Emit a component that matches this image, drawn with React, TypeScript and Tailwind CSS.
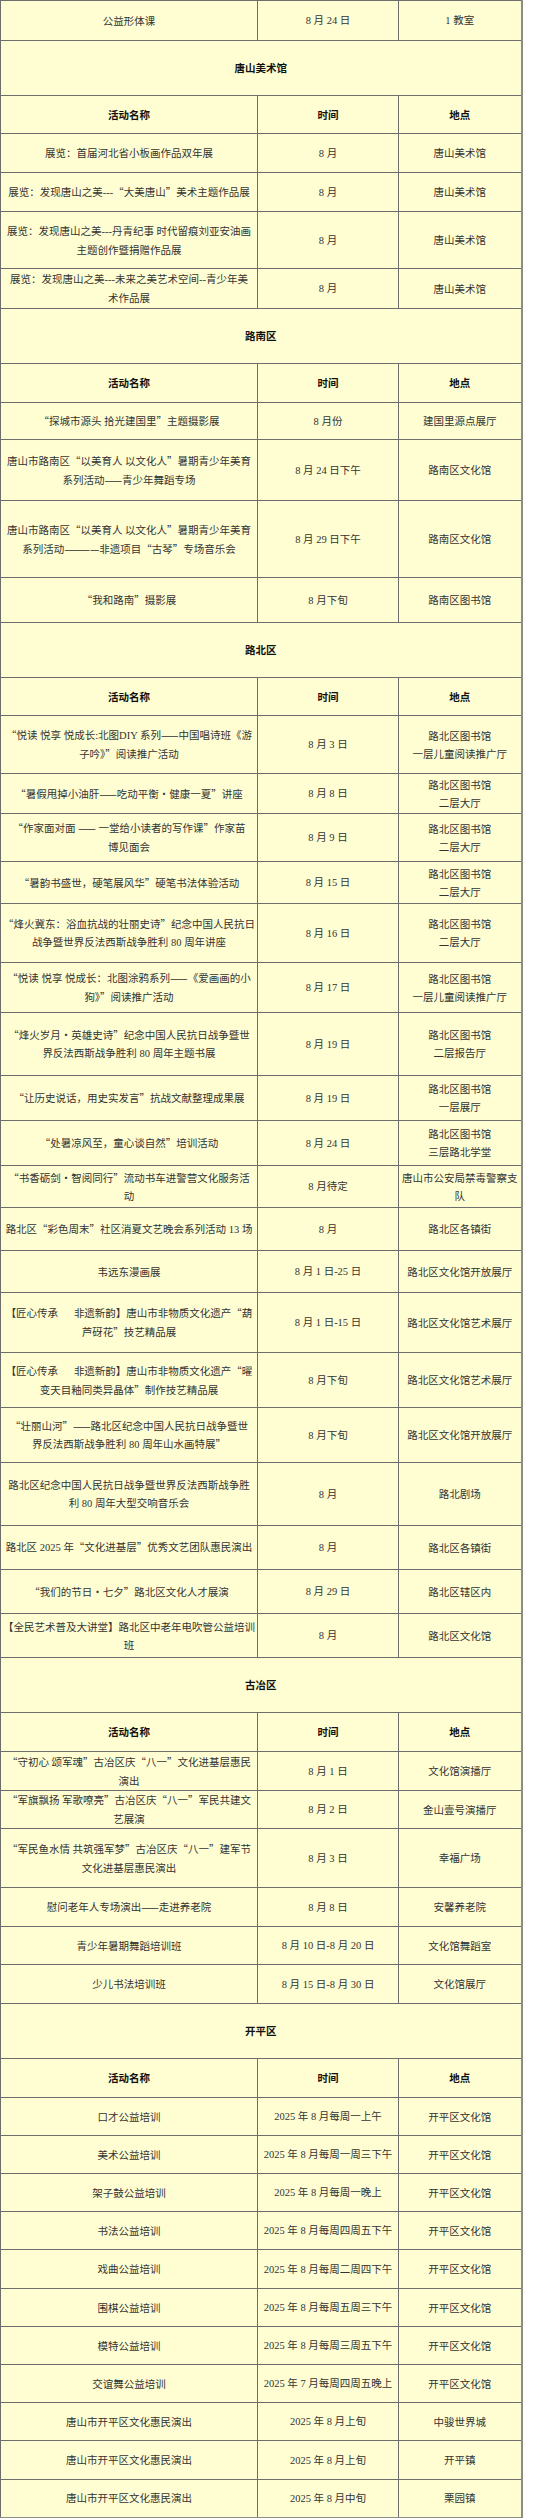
import React from 'react'

type Row =
  | { kind: 'section'; title: string; h: number }
  | { kind: 'head'; h: number }
  | { kind: 'item'; name: string; time: string; place: string; h: number }

const rows: Row[] = [
  { kind: 'item', name: '公益形体课', time: '8 月 24 日', place: '1 教室', h: 40 },

  { kind: 'section', title: '唐山美术馆', h: 55 },
  { kind: 'head', h: 38 },
  { kind: 'item', name: '展览：首届河北省小板画作品双年展', time: '8 月', place: '唐山美术馆', h: 39 },
  { kind: 'item', name: '展览：发现唐山之美---“大美唐山”美术主题作品展', time: '8 月', place: '唐山美术馆', h: 39 },
  { kind: 'item', name: '展览：发现唐山之美---丹青纪事 时代留痕刘亚安油画\n主题创作暨捐赠作品展', time: '8 月', place: '唐山美术馆', h: 57 },
  { kind: 'item', name: '展览：发现唐山之美---未来之美艺术空间--青少年美\n术作品展', time: '8 月', place: '唐山美术馆', h: 40 },

  { kind: 'section', title: '路南区', h: 55 },
  { kind: 'head', h: 39 },
  { kind: 'item', name: '“探城市源头 拾光建国里”主题摄影展', time: '8 月份', place: '建国里源点展厅', h: 37 },
  { kind: 'item', name: '唐山市路南区“以美育人 以文化人”暑期青少年美育\n系列活动——青少年舞蹈专场', time: '8 月 24 日下午', place: '路南区文化馆', h: 61 },
  { kind: 'item', name: '唐山市路南区“以美育人 以文化人”暑期青少年美育\n系列活动————非遗项目“古琴”专场音乐会', time: '8 月 29 日下午', place: '路南区文化馆', h: 77 },
  { kind: 'item', name: '“我和路南”摄影展', time: '8 月下旬', place: '路南区图书馆', h: 45 },

  { kind: 'section', title: '路北区', h: 55 },
  { kind: 'head', h: 38 },
  { kind: 'item', name: '“悦读 悦享 悦成长:北图DIY 系列——中国唱诗班《游\n子吟》”阅读推广活动', time: '8 月 3 日', place: '路北区图书馆\n一层儿童阅读推广厅', h: 58 },
  { kind: 'item', name: '“暑假甩掉小油肝——吃动平衡·健康一夏”讲座', time: '8 月 8 日', place: '路北区图书馆\n二层大厅', h: 40 },
  { kind: 'item', name: '“作家面对面 —— 一堂给小读者的写作课”作家苗\n博见面会', time: '8 月 9 日', place: '路北区图书馆\n二层大厅', h: 48 },
  { kind: 'item', name: '“暑韵书盛世，硬笔展风华”硬笔书法体验活动', time: '8 月 15 日', place: '路北区图书馆\n二层大厅', h: 42 },
  { kind: 'item', name: '“烽火冀东：浴血抗战的壮丽史诗”纪念中国人民抗日\n战争暨世界反法西斯战争胜利 80 周年讲座', time: '8 月 16 日', place: '路北区图书馆\n二层大厅', h: 59 },
  { kind: 'item', name: '“悦读 悦享 悦成长：北图涂鸦系列——《爱画画的小\n狗》”阅读推广活动', time: '8 月 17 日', place: '路北区图书馆\n一层儿童阅读推广厅', h: 50 },
  { kind: 'item', name: '“烽火岁月·英雄史诗”纪念中国人民抗日战争暨世\n界反法西斯战争胜利 80 周年主题书展', time: '8 月 19 日', place: '路北区图书馆\n二层报告厅', h: 63 },
  { kind: 'item', name: '“让历史说话，用史实发言”抗战文献整理成果展', time: '8 月 19 日', place: '路北区图书馆\n一层展厅', h: 45 },
  { kind: 'item', name: '“处暑凉风至，童心谈自然”培训活动', time: '8 月 24 日', place: '路北区图书馆\n三层路北学堂', h: 45 },
  { kind: 'item', name: '“书香砺剑·智阅同行”流动书车进警营文化服务活\n动', time: '8 月待定', place: '唐山市公安局禁毒警察支\n队', h: 42 },
  { kind: 'item', name: '路北区“彩色周末”社区消夏文艺晚会系列活动 13 场', time: '8 月', place: '路北区各镇街', h: 43 },
  { kind: 'item', name: '韦远东漫画展', time: '8 月 1 日-25 日', place: '路北区文化馆开放展厅', h: 42 },
  { kind: 'item', name: '【匠心传承      非遗新韵】唐山市非物质文化遗产“葫\n芦砑花”技艺精品展', time: '8 月 1 日-15 日', place: '路北区文化馆艺术展厅', h: 60 },
  { kind: 'item', name: '【匠心传承      非遗新韵】唐山市非物质文化遗产“曜\n变天目釉同类异晶体”制作技艺精品展', time: '8 月下旬', place: '路北区文化馆艺术展厅', h: 55 },
  { kind: 'item', name: '“壮丽山河”——路北区纪念中国人民抗日战争暨世\n界反法西斯战争胜利 80 周年山水画特展”', time: '8 月下旬', place: '路北区文化馆开放展厅', h: 55 },
  { kind: 'item', name: '路北区纪念中国人民抗日战争暨世界反法西斯战争胜\n利 80 周年大型交响音乐会', time: '8 月', place: '路北剧场', h: 63 },
  { kind: 'item', name: '路北区 2025 年“文化进基层”优秀文艺团队惠民演出', time: '8 月', place: '路北区各镇街', h: 44 },
  { kind: 'item', name: '“我们的节日·七夕”路北区文化人才展演', time: '8 月 29 日', place: '路北区辖区内', h: 44 },
  { kind: 'item', name: '【全民艺术普及大讲堂】路北区中老年电吹管公益培训\n班', time: '8 月', place: '路北区文化馆', h: 44 },

  { kind: 'section', title: '古冶区', h: 55 },
  { kind: 'head', h: 39 },
  { kind: 'item', name: '“守初心 颂军魂”古冶区庆“八一”文化进基层惠民\n演出', time: '8 月 1 日', place: '文化馆演播厅', h: 39 },
  { kind: 'item', name: '“军旗飘扬 军歌嘹亮”古冶区庆“八一”军民共建文\n艺展演', time: '8 月 2 日', place: '金山壹号演播厅', h: 38 },
  { kind: 'item', name: '“军民鱼水情 共筑强军梦”古冶区庆“八一”建军节\n文化进基层惠民演出', time: '8 月 3 日', place: '幸福广场', h: 59 },
  { kind: 'item', name: '慰问老年人专场演出——走进养老院', time: '8 月 8 日', place: '安馨养老院', h: 39 },
  { kind: 'item', name: '青少年暑期舞蹈培训班', time: '8 月 10 日-8 月 20 日', place: '文化馆舞蹈室', h: 38 },
  { kind: 'item', name: '少儿书法培训班', time: '8 月 15 日-8 月 30 日', place: '文化馆展厅', h: 39 },

  { kind: 'section', title: '开平区', h: 55 },
  { kind: 'head', h: 39 },
  { kind: 'item', name: '口才公益培训', time: '2025 年 8 月每周一上午', place: '开平区文化馆', h: 38 },
  { kind: 'item', name: '美术公益培训', time: '2025 年 8 月每周一周三下午', place: '开平区文化馆', h: 38 },
  { kind: 'item', name: '架子鼓公益培训', time: '2025 年 8 月每周一晚上', place: '开平区文化馆', h: 38 },
  { kind: 'item', name: '书法公益培训', time: '2025 年 8 月每周四周五下午', place: '开平区文化馆', h: 38 },
  { kind: 'item', name: '戏曲公益培训', time: '2025 年 8 月每周二周四下午', place: '开平区文化馆', h: 39 },
  { kind: 'item', name: '围棋公益培训', time: '2025 年 8 月每周五周三下午', place: '开平区文化馆', h: 38 },
  { kind: 'item', name: '模特公益培训', time: '2025 年 8 月每周三周五下午', place: '开平区文化馆', h: 38 },
  { kind: 'item', name: '交谊舞公益培训', time: '2025 年 7 月每周四周五晚上', place: '开平区文化馆', h: 38 },
  { kind: 'item', name: '唐山市开平区文化惠民演出', time: '2025 年 8 月上旬', place: '中骏世界城', h: 38 },
  { kind: 'item', name: '唐山市开平区文化惠民演出', time: '2025 年 8 月上旬', place: '开平镇', h: 39 },
  { kind: 'item', name: '唐山市开平区文化惠民演出', time: '2025 年 8 月中旬', place: '栗园镇', h: 38 },
]

// latin runs (digits, DIY, dashes) are set in a Times-like face, the rest in the CJK face
function Line({ s }: { s: string }) {
  const parts = s.split(/([\x20-\x7e]+)/).filter((p) => p.length > 0)
  return (
    <div>
      {parts.map((p, i) =>
        /^[\x20-\x7e]+$/.test(p) ? (
          <span key={i} className="font-['Liberation_Serif']">
            {p}
          </span>
        ) : (
          <span key={i}>{p}</span>
        ),
      )}
    </div>
  )
}

function Txt({ s }: { s: string }) {
  return (
    <>
      {s.split('\n').map((line, i) => (
        <Line key={i} s={line} />
      ))}
    </>
  )
}

const cell = 'border border-[#6e6e6e] px-[2px] py-0 text-center align-middle whitespace-pre leading-[18px]'

export default function App() {
  return (
    <div className="min-h-screen w-[550px] bg-white">
      <table className="w-[521px] table-fixed border-collapse border-r-2 border-b-2 border-[#8c8c8c] bg-[#fffed2] font-['Noto_Sans_CJK_SC','Noto_Sans',sans-serif] text-[10.5px] text-[#333333]">
        <colgroup>
          <col className="w-[257px]" />
          <col className="w-[141px]" />
          <col className="w-[123px]" />
        </colgroup>
        <tbody>
          {rows.map((r, i) => {
            if (r.kind === 'section') {
              return (
                <tr key={i} style={{ height: r.h }}>
                  <td colSpan={3} className={`${cell} font-bold text-[#111111]`}>
                    {r.title}
                  </td>
                </tr>
              )
            }
            if (r.kind === 'head') {
              return (
                <tr key={i} style={{ height: r.h }}>
                  <td className={`${cell} font-bold text-[#111111]`}>活动名称</td>
                  <td className={`${cell} font-bold text-[#111111]`}>时间</td>
                  <td className={`${cell} font-bold text-[#111111]`}>地点</td>
                </tr>
              )
            }
            return (
              <tr key={i} style={{ height: r.h }}>
                <td className={cell}>
                  <Txt s={r.name} />
                </td>
                <td className={cell}>
                  <Txt s={r.time} />
                </td>
                <td className={cell}>
                  <Txt s={r.place} />
                </td>
              </tr>
            )
          })}
        </tbody>
      </table>
    </div>
  )
}
